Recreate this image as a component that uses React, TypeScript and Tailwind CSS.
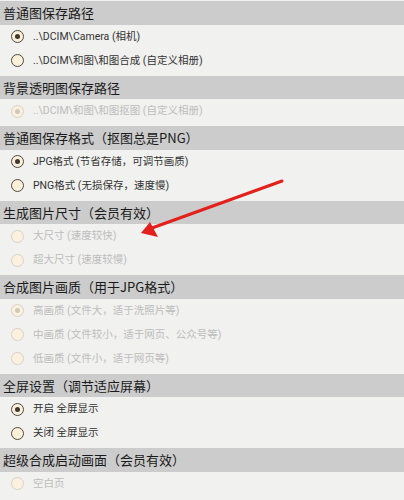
import React from 'react';

type Option = { label: string; checked?: boolean };
type Section = { title: string; disabled?: boolean; options: Option[] };

const sections: Section[] = [
  {
    title: '普通图保存路径',
    options: [
      { label: '..\\DCIM\\Camera (相机)', checked: true },
      { label: '..\\DCIM\\和图\\和图合成 (自定义相册)' },
    ],
  },
  {
    title: '背景透明图保存路径',
    disabled: true,
    options: [{ label: '..\\DCIM\\和图\\和图抠图 (自定义相册)', checked: true }],
  },
  {
    title: '普通图保存格式（抠图总是PNG）',
    options: [
      { label: 'JPG格式 (节省存储，可调节画质)', checked: true },
      { label: 'PNG格式 (无损保存，速度慢)' },
    ],
  },
  {
    title: '生成图片尺寸（会员有效）',
    disabled: true,
    options: [{ label: '大尺寸 (速度较快)' }, { label: '超大尺寸 (速度较慢)' }],
  },
  {
    title: '合成图片画质（用于JPG格式）',
    disabled: true,
    options: [
      { label: '高画质 (文件大，适于洗照片等)', checked: true },
      { label: '中画质 (文件较小，适于网页、公众号等)' },
      { label: '低画质 (文件小，适于网页等)' },
    ],
  },
  {
    title: '全屏设置（调节适应屏幕）',
    options: [{ label: '开启 全屏显示', checked: true }, { label: '关闭 全屏显示' }],
  },
  {
    title: '超级合成启动画面（会员有效）',
    disabled: true,
    options: [{ label: '空白页' }, { label: '随机模板' }],
  },
];

const Radio = ({ checked, disabled }: { checked?: boolean; disabled?: boolean }) => (
  <span
    className={`w-[13px] h-[13px] shrink-0 rounded-full border-[1.5px] flex items-center justify-center ${
      disabled ? 'border-[#d9d1c4] bg-[#fbf1de]' : 'border-[#4f4840] bg-[#fdf0d9]'
    }`}
  >
    {checked && (
      <span className={`w-[5px] h-[5px] rounded-full ${disabled ? 'bg-[#cfc7ba]' : 'bg-[#3f3832]'}`} />
    )}
  </span>
);

const App = () => {
  return (
    <div
      className="relative w-[404px] h-[500px] overflow-hidden bg-[#f1f1ef] pt-px"
      style={{ fontFamily: 'Roboto, "Noto Sans CJK SC", sans-serif' }}
    >
      {sections.map((section) => (
        <div key={section.title}>
          {/* section header */}
          <div
            className="h-[23.5px] flex items-center pl-[3px] bg-[#cccccc] text-[13px] text-[#1a1a1a]"
            style={{ fontFamily: '"Noto Sans CJK SC", serif' }}
          >
            {section.title}
          </div>
          <div className="pb-[3px]">
            {section.options.map((opt) => (
              <div key={opt.label} className="h-6 flex items-center pl-[11px] gap-[9px]">
                <Radio checked={opt.checked} disabled={section.disabled} />
                <span className={`text-[10.5px] ${section.disabled ? 'text-[#bdbdbd]' : 'text-[#333333]'}`}>
                  {opt.label}
                </span>
              </div>
            ))}
          </div>
        </div>
      ))}

      {/* red annotation arrow */}
      <svg className="absolute left-0 top-0 pointer-events-none" width="404" height="500">
        <line x1="282" y1="181" x2="152" y2="228" stroke="#e3201b" strokeWidth="3" strokeLinecap="round" />
        <polygon points="141,233 150,222 158,237" fill="#e3201b" />
      </svg>
    </div>
  );
};

export default App;
